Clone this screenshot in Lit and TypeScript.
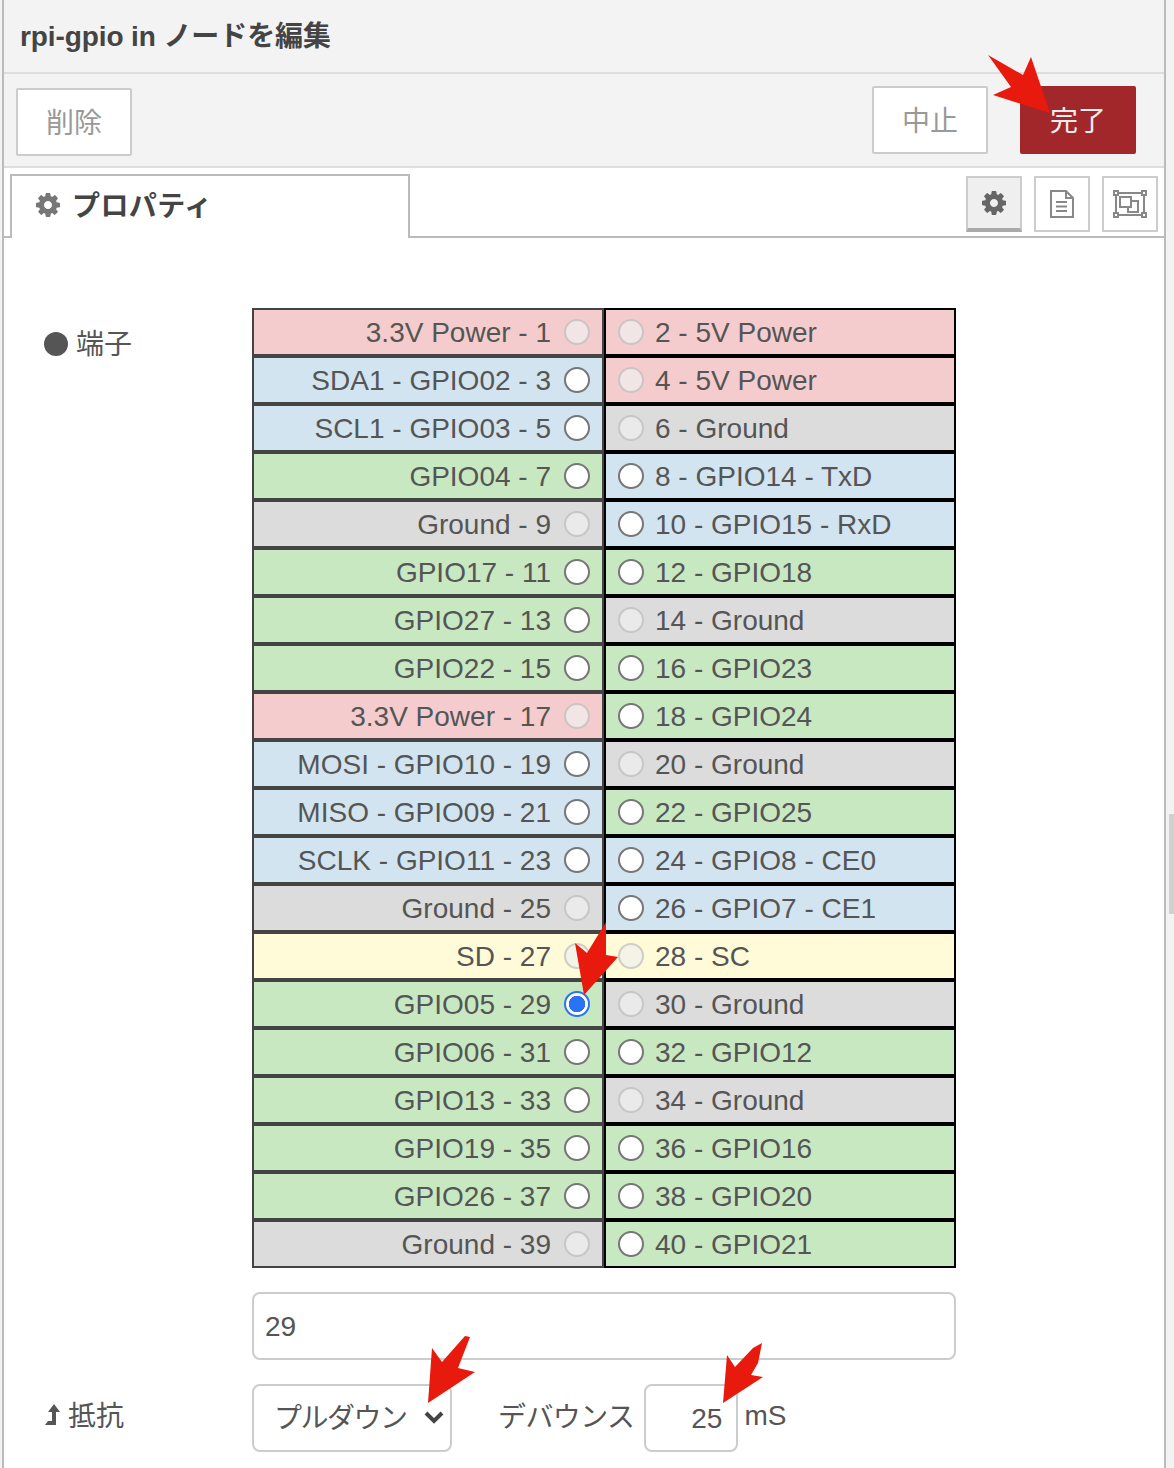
// app.ts
// rpi-gpio in node edit tray, with the pin table and the red note arrows

import { LitElement, html, css, svg } from "lit";
import { customElement } from "lit/decorators.js";
import { classMap } from "lit/directives/class-map.js";

type Kind = "power" | "bus" | "gpio" | "ground" | "id";
type Pin = { label: string; kind: Kind; off?: boolean; on?: boolean };

const left: Pin[] = [
  { label: "3.3V Power - 1", kind: "power", off: true },
  { label: "SDA1 - GPIO02 - 3", kind: "bus" },
  { label: "SCL1 - GPIO03 - 5", kind: "bus" },
  { label: "GPIO04 - 7", kind: "gpio" },
  { label: "Ground - 9", kind: "ground", off: true },
  { label: "GPIO17 - 11", kind: "gpio" },
  { label: "GPIO27 - 13", kind: "gpio" },
  { label: "GPIO22 - 15", kind: "gpio" },
  { label: "3.3V Power - 17", kind: "power", off: true },
  { label: "MOSI - GPIO10 - 19", kind: "bus" },
  { label: "MISO - GPIO09 - 21", kind: "bus" },
  { label: "SCLK - GPIO11 - 23", kind: "bus" },
  { label: "Ground - 25", kind: "ground", off: true },
  { label: "SD - 27", kind: "id", off: true },
  { label: "GPIO05 - 29", kind: "gpio", on: true },
  { label: "GPIO06 - 31", kind: "gpio" },
  { label: "GPIO13 - 33", kind: "gpio" },
  { label: "GPIO19 - 35", kind: "gpio" },
  { label: "GPIO26 - 37", kind: "gpio" },
  { label: "Ground - 39", kind: "ground", off: true },
];

const right: Pin[] = [
  { label: "2 - 5V Power", kind: "power", off: true },
  { label: "4 - 5V Power", kind: "power", off: true },
  { label: "6 - Ground", kind: "ground", off: true },
  { label: "8 - GPIO14 - TxD", kind: "bus" },
  { label: "10 - GPIO15 - RxD", kind: "bus" },
  { label: "12 - GPIO18", kind: "gpio" },
  { label: "14 - Ground", kind: "ground", off: true },
  { label: "16 - GPIO23", kind: "gpio" },
  { label: "18 - GPIO24", kind: "gpio" },
  { label: "20 - Ground", kind: "ground", off: true },
  { label: "22 - GPIO25", kind: "gpio" },
  { label: "24 - GPIO8 - CE0", kind: "bus" },
  { label: "26 - GPIO7 - CE1", kind: "bus" },
  { label: "28 - SC", kind: "id", off: true },
  { label: "30 - Ground", kind: "ground", off: true },
  { label: "32 - GPIO12", kind: "gpio" },
  { label: "34 - Ground", kind: "ground", off: true },
  { label: "36 - GPIO16", kind: "gpio" },
  { label: "38 - GPIO20", kind: "gpio" },
  { label: "40 - GPIO21", kind: "gpio" },
];

const arrows = [
  "988,55 1023,75 1031,57 1050,113 993,95 1011,87",
  "606,922 606,955 618,957 584,995 575,943 587,953",
  "428,1403 432,1348 442,1362 465,1336 470,1337 458,1368 475,1372",
  "723,1403 727,1355 735,1367 753,1348 762,1343 758,1363 751,1375 763,1377",
];

const gear = svg`<path d="M1152 896q0-106-75-181t-181-75-181 75-75 181 75 181 181 75 181-75 75-181zm512-109v222q0 12-8 23t-20 13l-185 28q-19 54-39 91 35 50 107 138 10 12 10 25t-9 23q-27 37-99 108t-94 71q-12 0-26-9l-138-108q-44 23-91 38-16 136-29 186-7 28-36 28h-222q-14 0-24.500-8.500t-11.500-21.500l-28-184q-49-16-90-37l-141 107q-10 9-25 9-14 0-25-11-126-114-165-168-7-10-7-23 0-12 8-23 15-21 51-66.500t54-70.500q-27-50-41-99l-183-27q-13-2-21-12.500t-8-23.500v-222q0-12 8-23t19-13l186-28q14-46 39-92-40-57-107-138-10-12-10-24 0-10 9-23 26-36 98.500-107.500t94.500-71.500q13 0 26 10l138 107q44-23 91-38 16-136 29-186 7-28 36-28h222q14 0 24.500 8.500t11.500 21.500l28 184q49 16 90 37l142-107q9-9 24-9 13 0 25 10 129 119 165 170 7 8 7 22 0 12-8 23-15 21-51 66.500t-54 70.500q26 50 41 98l183 28q13 2 21 12.500t8 23.500z"/>`;

@customElement("app-root")
export class AppRoot extends LitElement {
  static styles = css`
    :host {
      display: block;
      position: relative;
      height: 1468px;
      overflow: hidden;
      background: #f3f3f3;
      color: #555;
      font-family: "Liberation Sans", "Noto Sans CJK JP", sans-serif;
      font-size: 28px;
    }

    .tray {
      box-sizing: border-box;
      width: 1164px;
      height: 1468px;
      margin-left: 2px;
      border: solid #bbb;
      border-width: 0 2px;
      background: #fff;
    }

    .title {
      box-sizing: border-box;
      height: 74px;
      padding: 17px 0 0 16px;
      background: #f3f3f3;
      border-bottom: 2px solid #ddd;
      color: #444;
      font-weight: 700;
      line-height: 40px;
      letter-spacing: -0.1px;
    }

    .toolbar {
      box-sizing: border-box;
      height: 94px;
      display: flex;
      align-items: flex-start;
      gap: 32px;
      padding: 12px 28px 0 12px;
      background: #f3f3f3;
      border-bottom: 2px solid #ddd;
    }

    .btn {
      box-sizing: border-box;
      width: 116px;
      height: 68px;
      display: flex;
      align-items: center;
      justify-content: center;
      padding-bottom: 3px;
      background: #fff;
      border: 2px solid #ccc;
      border-radius: 2px;
      color: #999;
    }

    .btn.delete {
      margin: 2px auto 0 0;
    }

    .btn.done {
      background: #a1272a;
      border-color: #a1272a;
      color: #eee;
    }

    .tabs {
      box-sizing: border-box;
      height: 70px;
      display: flex;
      padding: 6px 6px 0 6px;
      border-bottom: 2px solid #bbb;
    }

    .tab {
      box-sizing: border-box;
      width: 400px;
      height: 64px;
      margin-bottom: -2px;
      display: flex;
      align-items: center;
      gap: 10px;
      padding: 0 0 6px 22px;
      background: #fff;
      border: solid #bbb;
      border-width: 2px 2px 0;
      color: #444;
      font-weight: 700;
      letter-spacing: 0.4px;
    }

    .tab svg {
      width: 28px;
      height: 28px;
      margin-top: 2px;
      fill: #777;
    }

    .tab-btns {
      margin-left: auto;
      display: flex;
      gap: 12px;
      padding: 2px 0 0;
    }

    .tab-btn {
      box-sizing: border-box;
      width: 56px;
      height: 56px;
      display: flex;
      align-items: center;
      justify-content: center;
      border: 2px solid #ccc;
    }

    .tab-btn.active {
      background: #efefef;
      border-bottom: 4px solid #aaa;
    }

    .tab-btn svg {
      display: block;
    }

    .form {
      padding: 70px 0 0 40px;
      display: grid;
      grid-template-columns: 208px 704px;
      row-gap: 24px;
    }

    .field-label {
      display: flex;
      align-items: center;
      height: 68px;
      line-height: 32px;
    }

    .pin-label {
      height: 72px;
      align-items: center;
      gap: 8px;
    }

    .pin-label span:last-child {
      padding-top: 2px;
    }

    .dot {
      width: 24px;
      height: 24px;
      border-radius: 50%;
      background: #555;
    }

    .pins {
      display: grid;
      grid-template-columns: 352px 352px;
      grid-auto-rows: 48px;
    }

    .pin {
      box-sizing: border-box;
      display: flex;
      align-items: center;
      border: 2px solid #444;
      padding: 0 12px;
      gap: 13px;
      line-height: 1;
    }

    .pin span {
      padding-top: 2px;
    }

    .pin.l {
      justify-content: flex-end;
    }

    .pin.r {
      border-color: #000;
      gap: 11px;
    }

    .power { background: #f5cccd; }
    .bus { background: #d2e4f0; }
    .gpio { background: #c8e8c2; }
    .ground { background: #dcdcdc; }
    .id { background: #fffbd8; }

    .radio {
      box-sizing: border-box;
      flex: none;
      width: 26px;
      height: 26px;
      margin: 0;
      appearance: none;
      border: 2px solid #767676;
      border-radius: 50%;
      background: #fff;
    }

    .radio:disabled {
      border-color: rgba(118, 118, 118, 0.3);
      background: rgba(239, 239, 239, 0.7);
    }

    .radio:checked {
      border-color: #2a73f5;
      background: radial-gradient(circle, #2a73f5 0 8px, #fff 8.5px);
    }

    .text {
      box-sizing: border-box;
      height: 68px;
      border: 2px solid #ccc;
      border-radius: 8px;
      background: #fff;
      color: #555;
      font: inherit;
      outline: none;
    }

    .number {
      grid-column: 2;
      width: 704px;
      padding: 2px 11px 0;
    }

    .controls {
      display: flex;
      align-items: center;
    }

    .select-wrap {
      position: relative;
      width: 200px;
      height: 68px;
    }

    .select {
      width: 200px;
      appearance: none;
      padding: 0 0 0 20px;
      letter-spacing: -1.5px;
    }

    .chevron {
      position: absolute;
      left: 172px;
      top: 26px;
      pointer-events: none;
    }

    .resist-icon {
      margin-bottom: 5px;
    }

    .resist {
      margin: 0 0 2px 7px;
    }

    .debounce-label {
      margin: 0 0 6px 46px;
      letter-spacing: -0.6px;
    }

    .debounce {
      width: 94px;
      margin-left: 10px;
      padding: 2px 14px 0 0;
      text-align: right;
    }

    .unit {
      margin: 0 0 4px 6px;
    }

    .handle {
      position: absolute;
      left: 1169px;
      top: 814px;
      width: 5px;
      height: 100px;
      background: #d0d0d0;
    }

    .notes {
      position: absolute;
      inset: 0;
      pointer-events: none;
    }

    .notes polygon {
      fill: #e8190d;
    }
  `;

  private renderPin(p: Pin, side: "l" | "r") {
    const radio = html`<input
      class="radio"
      type="radio"
      name="pin"
      ?disabled=${p.off}
      ?checked=${p.on}
    />`;
    const cls = { pin: true, [side]: true, [p.kind]: true };
    return side === "l"
      ? html`<div class=${classMap(cls)}><span>${p.label}</span>${radio}</div>`
      : html`<div class=${classMap(cls)}>${radio}<span>${p.label}</span></div>`;
  }

  render() {
    return html`
      <div class="tray">
        <div class="title">rpi-gpio in ノードを編集</div>
        <div class="toolbar">
          <div class="btn delete">削除</div>
          <div class="btn">中止</div>
          <div class="btn done">完了</div>
        </div>
        <div class="tabs">
          <div class="tab">
            <svg viewBox="0 0 1792 1792">${gear}</svg>
            <span>プロパティ</span>
          </div>
          <div class="tab-btns">
            <div class="tab-btn active">
              <svg width="28" height="28" viewBox="0 0 1792 1792" fill="#666">${gear}</svg>
            </div>
            <div class="tab-btn">
              <svg width="26" height="30" viewBox="0 0 26 30" fill="none" stroke="#888" stroke-width="2">
                <path d="M2 2h15l7 7v19H2z" />
                <path d="M17 2v7h7" />
                <path d="M7 13h11M7 17.500h11M7 22h11" />
              </svg>
            </div>
            <div class="tab-btn">
              <svg width="34" height="30" viewBox="0 0 34 30" fill="none" stroke="#888" stroke-width="2">
                <path d="M3 4h28M3 26h28M3 4v22M31 4v22" />
                <path d="M7 8h11v10H7z" />
                <path d="M18 12h7v11H15v-5" />
                <g fill="#fff">
                  <rect x="1" y="2" width="4" height="4" />
                  <rect x="29" y="2" width="4" height="4" />
                  <rect x="1" y="24" width="4" height="4" />
                  <rect x="29" y="24" width="4" height="4" />
                </g>
              </svg>
            </div>
          </div>
        </div>
        <div class="form">
          <div class="field-label pin-label"><span class="dot"></span><span>端子</span></div>
          <div class="pins">
            ${left.map(
              (p, i) => html`${this.renderPin(p, "l")}${this.renderPin(right[i], "r")}`,
            )}
          </div>
          <input class="text number" type="text" .value=${"29"} />
          <div class="field-label">
            <svg class="resist-icon" width="17" height="23" viewBox="0 0 17 23" fill="#555">
              <path d="M10 0l6 8h-4v13H1l3-4h4V8H4z" />
            </svg>
            <span class="resist">抵抗</span>
          </div>
          <div class="controls">
            <div class="select-wrap">
              <select class="text select">
                <option>プルダウン</option>
              </select>
              <svg class="chevron" width="20" height="14" viewBox="0 0 20 14" fill="none" stroke="#444" stroke-width="4">
                <path d="M2 3l8 8 8-8" />
              </svg>
            </div>
            <span class="debounce-label">デバウンス</span>
            <input class="text debounce" type="text" .value=${"25"} />
            <span class="unit">mS</span>
          </div>
        </div>
      </div>
      <div class="handle"></div>
      <svg class="notes" width="1174" height="1468" viewBox="0 0 1174 1468">
        ${arrows.map((pts) => svg`<polygon points=${pts}></polygon>`)}
      </svg>
    `;
  }
}
